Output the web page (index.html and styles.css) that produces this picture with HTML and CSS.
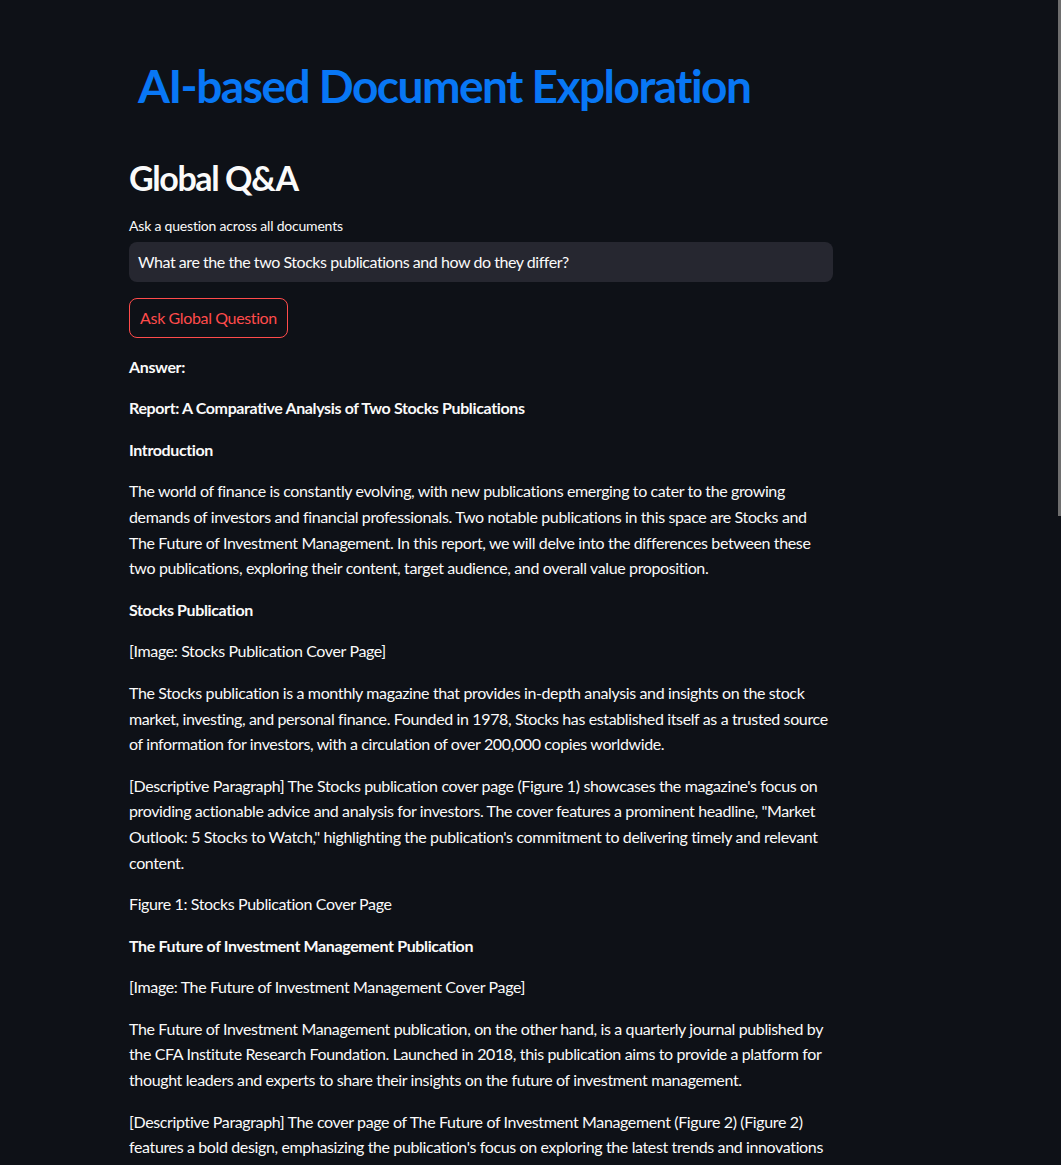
FILE: index.html
```html
<!DOCTYPE html>
<html lang="en">
<head>
<meta charset="utf-8">
<title>AI-based Document Exploration</title>
<link rel="stylesheet" href="styles.css">
</head>
<body>
<div class="scrollbar"></div>
<main class="main">
  <h1 class="title">AI-based Document Exploration</h1>
  <h2 class="header">Global Q&amp;A</h2>
  <label class="field-label">Ask a question across all documents</label>
  <div class="text-input">What are the the two Stocks publications and how do they differ?</div>
  <button class="btn">Ask Global Question</button>
  <div class="markdown">
    <p><strong>Answer:</strong></p>
    <p><strong>Report: A Comparative Analysis of Two Stocks Publications</strong></p>
    <p><strong>Introduction</strong></p>
    <p>The world of finance is constantly evolving, with new publications emerging to cater to the growing<br>demands of investors and financial professionals. Two notable publications in this space are Stocks and<br>The Future of Investment Management. In this report, we will delve into the differences between these<br>two publications, exploring their content, target audience, and overall value proposition.</p>
    <p><strong>Stocks Publication</strong></p>
    <p>[Image: Stocks Publication Cover Page]</p>
    <p>The Stocks publication is a monthly magazine that provides in-depth analysis and insights on the stock<br>market, investing, and personal finance. Founded in 1978, Stocks has established itself as a trusted source<br>of information for investors, with a circulation of over 200,000 copies worldwide.</p>
    <p>[Descriptive Paragraph] The Stocks publication cover page (Figure 1) showcases the magazine's focus on<br>providing actionable advice and analysis for investors. The cover features a prominent headline, "Market<br>Outlook: 5 Stocks to Watch," highlighting the publication's commitment to delivering timely and relevant<br>content.</p>
    <p>Figure 1: Stocks Publication Cover Page</p>
    <p><strong>The Future of Investment Management Publication</strong></p>
    <p>[Image: The Future of Investment Management Cover Page]</p>
    <p>The Future of Investment Management publication, on the other hand, is a quarterly journal published by<br>the CFA Institute Research Foundation. Launched in 2018, this publication aims to provide a platform for<br>thought leaders and experts to share their insights on the future of investment management.</p>
    <p>[Descriptive Paragraph] The cover page of The Future of Investment Management (Figure 2) (Figure 2)<br>features a bold design, emphasizing the publication's focus on exploring the latest trends and innovations</p>
  </div>
</main>
</body>
</html>
```
FILE: styles.css
```css
html, body {
  margin: 0;
  padding: 0;
  height: 100%;
  overflow: hidden;
  background: #0e1117;
}
body {
  font-family: "Lato", "Liberation Sans", sans-serif;
  color: #fafafa;
  font-size: 16px;
  letter-spacing: -0.37px;
}
.scrollbar {
  position: fixed;
  top: 0;
  right: 0;
  width: 3px;
  height: 516px;
  background: #6e6e6e;
}
.main {
  width: 704px;
  margin-left: 129px;
  padding-top: 57px;
}
.title {
  margin: 0 0 41px 0;
  padding-left: 9px;
  font-size: 46px;
  line-height: 57.6px;
  font-weight: 700;
  color: #0877f5;
  letter-spacing: -1.5px;
}
.header {
  margin: 0 0 17px 0;
  font-size: 34px;
  line-height: 43px;
  font-weight: 700;
  letter-spacing: -1.4px;
}
.field-label {
  display: block;
  font-size: 14px;
  line-height: 20px;
  margin-bottom: 6px;
  letter-spacing: -0.2px;
}
.text-input {
  box-sizing: border-box;
  height: 40px;
  display: flex;
  align-items: center;
  padding-left: 9px;
  background: #262730;
  border-radius: 8px;
  font-size: 16px;
  letter-spacing: -0.45px;
}
.btn {
  display: block;
  margin-top: 16px;
  height: 40px;
  width: 159px;
  padding: 0;
  white-space: nowrap;
  text-align: center;
  background: transparent;
  border: 1px solid #ff4b4b;
  border-radius: 8px;
  color: #ff4b4b;
  font-family: inherit;
  font-size: 16px;
  letter-spacing: -0.37px;
}
.markdown {
  margin-top: 16px;
}
.markdown p {
  margin: 0 0 16px 0;
  line-height: 25.6px;
  white-space: nowrap;
}
.markdown strong {
  font-weight: 700;
}
```
